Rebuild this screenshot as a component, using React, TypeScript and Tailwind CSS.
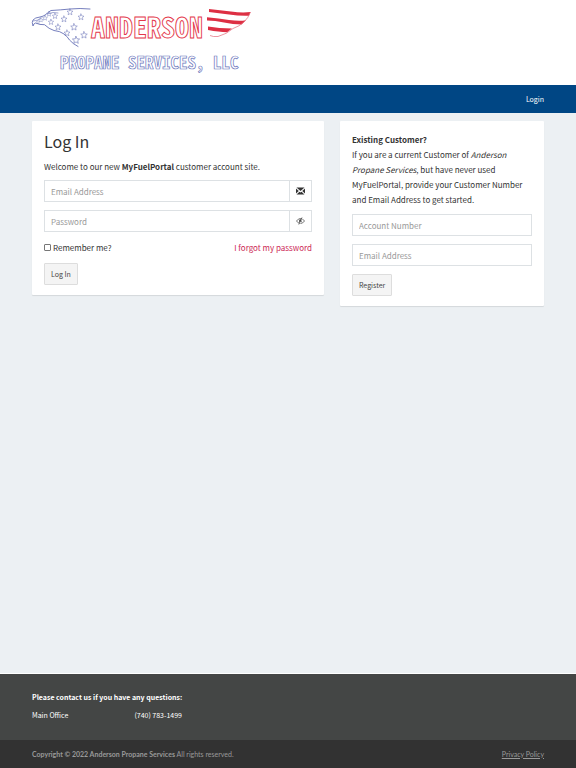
import {useState, type ReactNode} from 'react';

// x, y, scale
const STARS = [
  [38, 22, 0.6], [41, 20, 0.7], [45, 18, 0.8], [49, 14, 0.8], [55, 16, 0.9], [64, 19, 1],
  [51, 22, 0.9], [58, 27, 1], [70, 12, 1], [81, 17, 1], [74, 27, 1.1], [67, 33, 1],
  [84, 35, 1.1], [76, 40, 1.2],
];

const STAR_PATH =
  'M0 -3 L.9 -1 L3 -.8 L1.4 .6 L1.9 2.8 L0 1.6 L-1.9 2.8 L-1.4 .6 L-3 -.8 L-.9 -1 Z';

const INPUT_CLASS =
  'h-[22px] w-full min-w-0 border border-[#dde1e4] bg-white px-1.5 text-[8px] text-[#555] outline-none placeholder:text-[#999]';

const BUTTON_CLASS =
  'h-[22px] rounded-[1px] border border-[#dddddd] bg-[#f4f4f4] px-1.5 text-[7px] text-[#444]';

function Logo() {
  return (
    <svg
      width="220"
      height="72"
      viewBox="32 8 220 72"
      role="img"
      aria-label="Anderson Propane Services, LLC"
      className="block overflow-visible"
    >
      {/* Eagle head */}
      <g fill="none" stroke="#6670b5" strokeLinejoin="round" strokeLinecap="round">
        <path
          strokeWidth="0.9"
          d="M90 9 Q80 8 70 9 T51 10.500 Q48 12 46 14.500 Q43 16.500 40 17 Q35 17.500 33 20 Q31.500 22 33 26 Q33.500 23.500 35.500 23 Q40 25 44.500 24.700 Q49 29 54 30.500 Q60 31 64 34 Q67 36 69.500 40 Q73 44 78 46.500"
        />
        <path strokeWidth="0.6" d="M33.500 21 Q38 21 41 18 M47 14 L53 12.500 L58 13" />
        {STARS.map(([x, y, scale]) => (
          <path
            key={`${x}-${y}`}
            d={STAR_PATH}
            transform={`translate(${x} ${y}) scale(${scale})`}
            strokeWidth="0.5"
          />
        ))}
      </g>
      {/* Flag wing */}
      <g fill="#dd2f43">
        <path d="M209 9 Q220 10 231 11.500 T250.500 12 L249 15.700 Q239 16 229 14.500 T209 12 Z" />
        <path d="M207 17.300 Q219 18.500 229 20 T246 20.300 L241.500 24.500 Q233 24.500 224 22.500 T207 20.500 Z" />
        <path d="M208 26.500 Q219 28.500 232 28.500 L227 32.300 Q219 32 208 30 Z" />
      </g>
      <path
        d="M250.500 12 Q246 24 233 28.500 Q227 34 218 36.500 Q213 37 210 35.500"
        fill="none"
        stroke="#e4687a"
        strokeWidth="0.7"
      />
      <g
        fill="white"
        fontWeight="700"
        className="font-['Noto_Sans_Mono_CJK_SC','Noto_Sans_CJK_SC',sans-serif]"
      >
        <text x="91" y="38" fontSize="28" stroke="#e4384b" strokeWidth="0.9">
          ANDERSON
        </text>
        <text x="60" y="69" fontSize="17" stroke="#6d78bd" strokeWidth="0.7">
          PROPANE SERVICES, LLC
        </text>
      </g>
    </svg>
  );
}

function EnvelopeIcon() {
  return (
    <svg width="9" height="8" viewBox="0 0 18 16" fill="#333" aria-hidden="true">
      <path d="M1 1h16L9 8Z" />
      <path d="M0 3l5.500 5L0 13Z" />
      <path d="M18 3l-5.500 5L18 13Z" />
      <path d="M1 15l6-5.500 2 1.600 2-1.600 6 5.500Z" />
    </svg>
  );
}

function EyeSlashIcon() {
  return (
    <svg width="9" height="8" viewBox="0 0 18 16" fill="none" stroke="#444" aria-hidden="true">
      <path d="M1 8Q4.500 3 9 3t8 5q-3.500 5-8 5T1 8Z" strokeWidth="1.500" />
      <circle cx="9" cy="7.500" r="3" fill="#444" stroke="none" />
      <path d="M13.500 1L7 15" stroke="white" strokeWidth="1.500" />
      <path d="M12 1L5.500 15" strokeWidth="1.500" />
    </svg>
  );
}

function IconInput({label, type, children}: {label: string; type: string; children: ReactNode}) {
  return (
    <div className="flex">
      <input type={type} placeholder={label} aria-label={label} className={INPUT_CLASS} />
      <span className="flex w-[22px] shrink-0 items-center justify-center border border-l-0 border-[#dde1e4]">
        {children}
      </span>
    </div>
  );
}

export default function App() {
  const [remember, setRemember] = useState(false);

  return (
    <div className="flex min-h-screen flex-col bg-[#ecf0f3] font-['Noto_Sans_CJK_SC','Noto_Sans',sans-serif] text-[8px] leading-[15px] text-[#333]">
      <header>
        <div className="bg-white px-8 pt-2 pb-[5px]">
          <Logo />
        </div>
        <nav className="flex h-7 items-center justify-end bg-[#004684] px-8">
          <a href="#login" className="text-[7px] text-white">
            Login
          </a>
        </nav>
      </header>

      <main className="grid flex-1 grid-cols-12 items-start gap-4 px-8 pt-2">
        <form
          className="col-span-7 rounded-[1px] bg-white px-3 py-2.5 shadow-[0_1px_1px_rgba(0,0,0,0.1)]"
          onSubmit={(e) => e.preventDefault()}
        >
          <h1 className="text-base leading-5">Log In</h1>
          <p className="mt-2 mb-1.5">
            Welcome to our new <strong>MyFuelPortal</strong> customer account site.
          </p>
          <div className="flex flex-col gap-2">
            <IconInput label="Email Address" type="email">
              <EnvelopeIcon />
            </IconInput>
            <IconInput label="Password" type="password">
              <EyeSlashIcon />
            </IconInput>
          </div>
          <div className="mt-2 mb-2 flex items-center justify-between">
            <label className="flex items-center gap-0.5">
              <input
                type="checkbox"
                checked={remember}
                onChange={(e) => setRemember(e.target.checked)}
                className="size-[7px] appearance-none rounded-[1px] border border-[#777] bg-white checked:bg-[#004684]"
              />
              Remember me?
            </label>
            <a href="#forgot" className="text-[#cc2755]">
              I forgot my password
            </a>
          </div>
          <button type="submit" className={BUTTON_CLASS}>
            Log In
          </button>
        </form>

        <form
          className="col-span-5 rounded-[1px] bg-white px-3 pt-[11px] pb-2.5 shadow-[0_1px_1px_rgba(0,0,0,0.1)]"
          onSubmit={(e) => e.preventDefault()}
        >
          <h2 className="font-bold">Existing Customer?</h2>
          <p className="mb-[7px]">
            If you are a current Customer of <em>Anderson Propane Services</em>, but have never
            used MyFuelPortal, provide your Customer Number and Email Address to get started.
          </p>
          <div className="flex flex-col items-start gap-2">
            <input
              type="text"
              placeholder="Account Number"
              aria-label="Account Number"
              className={INPUT_CLASS}
            />
            <input
              type="email"
              placeholder="Email Address"
              aria-label="Email Address"
              className={INPUT_CLASS}
            />
            <button type="submit" className={BUTTON_CLASS}>
              Register
            </button>
          </div>
        </form>
      </main>

      <footer className="border-t border-white text-[7px]">
        <div className="bg-[#444645] px-8 pt-4 pb-[17px] text-white">
          <h2 className="font-bold">Please contact us if you have any questions:</h2>
          <div className="mt-[3px] grid grid-cols-5">
            <span>Main Office</span>
            <span>(740) 783-1499</span>
          </div>
        </div>
        <div className="flex h-7 items-center justify-between bg-[#323232] px-8 font-[Lato,sans-serif] text-[#999]">
          <span>
            <strong>Copyright © 2022 Anderson Propane Services</strong> All rights reserved.
          </span>
          <a href="#privacy" className="underline">
            Privacy Policy
          </a>
        </div>
      </footer>
    </div>
  );
}
